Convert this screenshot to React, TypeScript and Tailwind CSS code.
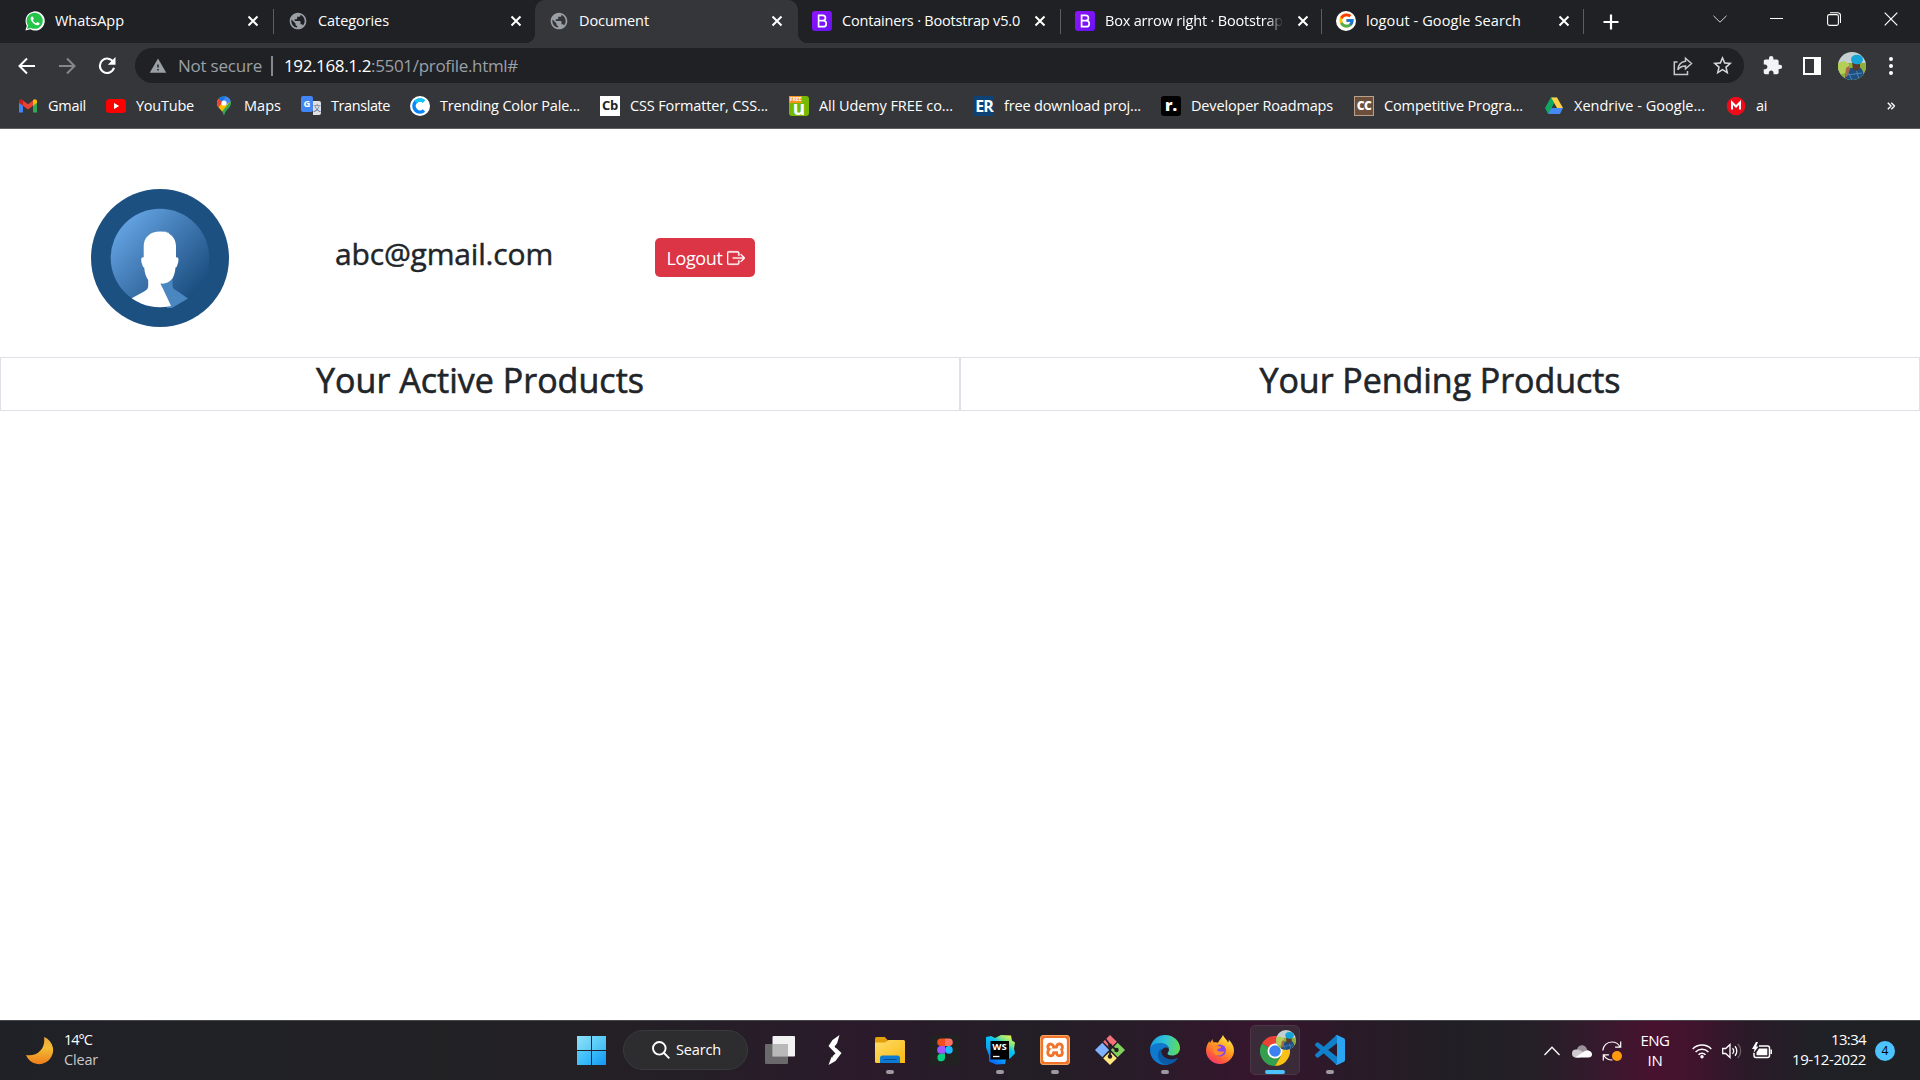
import React, { useLayoutEffect, useRef } from "react";
import { FcGoogle } from "react-icons/fc";
import { MdExtension, MdPublic, MdStarBorder, MdWarning } from "react-icons/md";
import { SiXampp } from "react-icons/si";
import { BsBoxArrowRight } from "react-icons/bs";

/** One line of text whose letter spacing is tuned so that it fills `w` pixels. */
function Fit({ children, w, className = "" }: { children: string; w: number; className?: string }) {
  const ref = useRef<HTMLSpanElement>(null);
  useLayoutEffect(() => {
    const el = ref.current;
    if (!el) return;
    const fit = () => {
      el.style.letterSpacing = "0px";
      const natural = el.getBoundingClientRect().width;
      el.style.letterSpacing = `${(w - natural) / children.length}px`;
    };
    fit();
    document.fonts?.ready.then(fit);
  }, [children, w]);
  return (
    <span ref={ref} className={`inline-block shrink-0 whitespace-pre ${className}`}>
      {children}
    </span>
  );
}

function Cross() {
  return (
    <svg viewBox="0 0 12 12" className="size-3 shrink-0" stroke="#fff" strokeWidth="2">
      <path d="M1.5 1.5l9 9M10.5 1.5l-9 9" />
    </svg>
  );
}

const BootstrapTile = () => (
  <span className="flex size-5 items-center justify-center rounded-[3px] bg-gradient-to-br from-[#9013fb] to-[#6610f2]">
    <svg viewBox="0 0 20 20" className="size-5" fill="none" stroke="#fff" strokeWidth="1.7">
      <path d="M6.6 4.3h4.2a2.6 2.6 0 0 1 0 5.3H6.6zM6.6 9.6h4.6a3 3 0 0 1 0 6.1H6.6z" />
    </svg>
  </span>
);

const WhatsAppIcon = () => (
  <svg viewBox="0 0 20 20" className="size-5">
    <path d="M.4 19.6l1.4-4.9A9.6 9.6 0 1 1 5.4 18.300z" fill="#fff" />
    <path d="M2 18l1-3.600A8.100 8.100 0 1 1 6 17z" fill="#25c54a" />
    <path
      d="M7 5.400c-.8.2-1.500 1.100-1.400 2.200.3 3 3.600 6.400 6.700 6.700 1 .1 2-.5 2.200-1.400v-.8l-2.200-1.100-1.200 1.200c-1.500-.5-2.700-1.700-3.300-3.200l1-1.100-1-2.400z"
      fill="#fff"
    />
  </svg>
);

const Globe = () => <MdPublic className="size-[22px] text-[#9aa0a6]" />;

type TabData = { title: string; w: number; width: string; icon: React.ReactNode; active?: boolean; line?: boolean };

const tabs: TabData[] = [
  { title: "WhatsApp", w: 69, width: "w-[264px]", icon: <WhatsAppIcon />, line: true },
  { title: "Categories", w: 71, width: "w-[261px]", icon: <Globe /> },
  { title: "Document", w: 70, width: "w-[263px]", icon: <Globe />, active: true },
  { title: "Containers · Bootstrap v5.0", w: 178, width: "w-[263px]", icon: <BootstrapTile />, line: true },
  { title: "Box arrow right · Bootstrap", w: 178, width: "w-[261px]", icon: <BootstrapTile />, line: true },
  {
    title: "logout - Google Search",
    w: 155,
    width: "w-[262px]",
    icon: (
      <span className="flex size-5 items-center justify-center rounded-full bg-white">
        <FcGoogle className="size-[17px]" />
      </span>
    ),
    line: true,
  },
];

function Tab({ tab, first }: { tab: TabData; first: boolean }) {
  return (
    <div
      className={`relative flex h-[43px] shrink-0 items-center pb-[2px] ${first ? "pl-[15px]" : "pl-[14px]"} ${tab.width} ${tab.active ? "rounded-t-[10px] bg-[#35363a]" : ""}`}
    >
      {tab.active && (
        <>
          <span className="absolute bottom-0 -left-2.5 size-2.5 bg-[radial-gradient(circle_at_0_0,#202124_10px,#35363a_10.5px)]" />
          <span className="absolute -right-2.5 bottom-0 z-10 size-2.5 bg-[radial-gradient(circle_at_100%_0,#202124_10px,#35363a_10.5px)]" />
        </>
      )}
      <span className="flex size-5 shrink-0 items-center justify-center">{tab.icon}</span>
      <span
        className={`ml-[10px] flex w-[180px] overflow-hidden ${tab.title.startsWith("Box") ? "[mask-image:linear-gradient(to_right,#000_90%,transparent_99%)]" : ""}`}
      >
        <Fit w={tab.w} className="text-[14.5px] leading-5 text-white">
          {tab.title}
        </Fit>
      </span>
      <span className="ml-[12px] flex items-center pt-px">
        <Cross />
      </span>
      {tab.line && <span className="absolute top-[9px] right-0 h-[25px] w-px bg-[#5a5d62]" />}
    </div>
  );
}

function TabStrip() {
  return (
    <div className="flex h-[43px] bg-[#202124] pl-[10px]">
      {tabs.map((t, i) => (
        <Tab key={t.title} tab={t} first={i === 0} />
      ))}
      <div className="flex w-[54px] items-center justify-center">
        <svg viewBox="0 0 16 16" className="size-4" stroke="#fff" strokeWidth="2.200">
          <path d="M8 .5v15M.5 8h15" />
        </svg>
      </div>
      <div className="ml-auto flex h-[37px] items-center">
        <div className="flex w-[57px] justify-center">
          <svg viewBox="0 0 14 8" className="h-2 w-3.5" fill="none" stroke="#d5d6d8">
            <path d="M.5.8L7 7.200 13.500.8" />
          </svg>
        </div>
        <div className="flex w-[57px] justify-center">
          <span className="h-px w-[13px] bg-white" />
        </div>
        <div className="flex w-[57px] justify-center">
          <svg viewBox="0 0 14 14" className="size-3.5" fill="none" stroke="#fff" strokeWidth="1.100">
            <rect x=".6" y="2.600" width="10.800" height="10.800" rx="1.800" />
            <path d="M3 .7h7.500a3 3 0 0 1 3 3V11" />
          </svg>
        </div>
        <div className="flex w-[58px] justify-center">
          <svg viewBox="0 0 14 14" className="size-3.5" stroke="#fff" strokeWidth="1.200">
            <path d="M.7.7l12.600 12.600M13.300.7L.7 13.300" />
          </svg>
        </div>
      </div>
    </div>
  );
}

function Portrait({ className }: { className: string }) {
  return (
    <svg viewBox="0 0 28 28" className={className}>
      <defs>
        <clipPath id="portrait-clip">
          <circle cx="14" cy="14" r="14" />
        </clipPath>
      </defs>
      <g clipPath="url(#portrait-clip)">
        <rect width="28" height="28" fill="#c3cfd0" />
        <rect y="11" width="28" height="17" fill="#8fae3c" />
        <path d="M0 11l6-2 5 3v8l-11 3z" fill="#b3cf58" />
        <path d="M7 28c0-6 2-11 6-12l8-1c4 1 5 8 5 13z" fill="#1d4f83" />
        <path d="M10 20l4 8M18 17l3 10M9 23l15-2" stroke="#4d86b5" />
        <path d="M14 9h8v6l-3 4-4-1z" fill="#5b3a2b" />
        <path d="M7 24l1-8 3-2 1 3-3 8z" fill="#a8694a" />
        <ellipse cx="19" cy="7.500" rx="6" ry="4.800" fill="#17a5d8" />
      </g>
    </svg>
  );
}

function Toolbar() {
  return (
    <div className="flex h-[45px] items-center bg-[#35363a]">
      <div className="flex w-[135px] items-center pl-[18px]">
        <svg viewBox="0 0 18 18" className="size-[18px]" fill="none" stroke="#fff" strokeWidth="2">
          <path d="M17 9H2M9 1.500L1.500 9 9 16.500" />
        </svg>
        <svg viewBox="0 0 18 18" className="ml-[22px] size-[18px]" fill="none" stroke="#85878a" strokeWidth="2">
          <path d="M1 9h15M9 1.500L16.500 9 9 16.500" />
        </svg>
        <svg viewBox="0 0 18 18" className="ml-[22px] size-[18px]" fill="none" stroke="#fff" strokeWidth="2.100">
          <path d="M15.500 5.500A7.200 7.200 0 1 0 16 10.800" />
          <path d="M17.500 0v7.800H9.800z" fill="#fff" stroke="none" />
        </svg>
      </div>
      <div className="flex h-[35px] w-[1609px] items-center rounded-full bg-[#202124] pl-[14px]">
        <MdWarning className="size-[18px] text-[#9aa0a6]" />
        <Fit w={84} className="ml-[11px] text-[17px] leading-6 text-[#9aa0a6]">
          Not secure
        </Fit>
        <span className="ml-[9px] h-5 w-0.5 bg-[#85888c]" />
        <Fit w={87} className="ml-[11px] text-[17px] leading-6 text-white">
          192.168.1.2
        </Fit>
        <Fit w={147} className="text-[17px] leading-6 text-[#9aa0a6]">
          :5501/profile.html#
        </Fit>
        <div className="mr-[10px] ml-auto flex items-center gap-[18px]">
          <svg viewBox="0 0 20 20" className="size-5" fill="none" stroke="#c4c7c9" strokeWidth="1.500">
            <path d="M4.500 6H1.300v12.500h13.200V15" />
            <path d="M12.500 2.200l6 5.300-6 5.300V9.900c-3.500 0-6 1.200-7.700 4 .3-4.500 3-8 7.700-8.700z" />
          </svg>
          <MdStarBorder className="size-[23px] text-[#d5d7d9]" />
        </div>
      </div>
      <div className="flex flex-1 items-center pl-[18px]">
        <MdExtension className="size-[21px] text-[#f1f3f4]" />
        <span className="ml-[20px] flex size-[18px] border-2 border-r-[7px] border-white" />
        <Portrait className="ml-[17px] size-7" />
        <span className="ml-[23px] flex flex-col gap-[3px]">
          <i className="size-1 rounded-full bg-white" />
          <i className="size-1 rounded-full bg-white" />
          <i className="size-1 rounded-full bg-white" />
        </span>
      </div>
    </div>
  );
}

const icons = {
  gmail: (
    <svg viewBox="0 0 20 20" className="size-5">
      <path d="M1 4.500v12h4V8.500z" fill="#4285f4" />
      <path d="M19 4.500v12h-4V8.500z" fill="#34a853" />
      <path d="M5 4.500l5 3.800 5-3.800v5.200l-5 3.800-5-3.800z" fill="#ea4335" />
      <path d="M1 5.500C1 3.300 3.300 2.500 5 4v5.700L1 6.700z" fill="#c5221f" />
      <path d="M19 5.500c0-2.200-2.300-3-4-1.500v5.700l4-3z" fill="#fbbc04" />
    </svg>
  ),
  youtube: (
    <svg viewBox="0 0 20 20" className="size-5">
      <rect y="3" width="20" height="14" rx="3.500" fill="#f00" />
      <path d="M8 7l5.200 3L8 13z" fill="#fff" />
    </svg>
  ),
  maps: (
    <svg viewBox="0 0 20 20" className="size-5">
      <path d="M10 .3c4 0 7 3 7 6.800 0 5-5.400 6-7 12.700C8.400 13.100 3 12.100 3 7.100 3 3.300 6 .3 10 .3z" fill="#34a853" />
      <path d="M16.700 5.200L8 15.500C5.800 12.200 3 10.800 3 7.100c0-1.800.6-3.200 1.600-4.400L10 7z" fill="#fbbc04" />
      <path d="M4.600 2.700L8.500 6 4.800 11.200C3.500 9.700 3 8.700 3 7.100c0-1.800.6-3.200 1.600-4.400z" fill="#ea4335" />
      <path d="M4.600 2.700C6.200.8 9 -.2 12 .6L8 6z" fill="#1a73e8" />
      <path d="M12 .6c2.200.6 4 2.300 4.700 4.600L12 9 8 6z" fill="#4285f4" />
      <circle cx="10" cy="7" r="2.600" fill="#fff" />
    </svg>
  ),
  translate: (
    <span className="flex size-5">
      <i className="flex h-4 w-[12px] items-center justify-center rounded-[2px] bg-[#4285f4] text-[9.500px] leading-4 font-bold text-white not-italic">
        G
      </i>
      <i className="mt-[5px] flex h-[14px] w-2 justify-center rounded-r-[2px] bg-[#dfe1e5] font-['Noto_Sans_CJK_SC',sans-serif] text-[8px] leading-[14px] text-[#5f6f85] not-italic">
        文
      </i>
    </span>
  ),
  color: (
    <svg viewBox="0 0 20 20" className="size-5">
      <circle cx="10" cy="10" r="10" fill="#fff" />
      <path d="M14 5.500a6 6 0 1 0 0 9" fill="none" stroke="#0a84f5" strokeWidth="3.600" />
      <path d="M14 5.500A6 6 0 0 0 5.500 6" fill="none" stroke="#12c5f5" strokeWidth="3.600" />
    </svg>
  ),
  cb: (
    <span className="flex size-5 items-center justify-center bg-white text-[13px] font-bold tracking-[-.3px] text-[#222]">
      Cb
    </span>
  ),
  udemy: (
    <span className="flex size-5 flex-col rounded-[3px] bg-[#76b900] text-white">
      <i className="h-[7px] w-[13px] bg-[#f7941d] px-px text-[5px] leading-[7px] font-bold not-italic">FREE</i>
      <b className="h-[13px] text-center text-[19px] leading-[11px]">u</b>
    </span>
  ),
  er: (
    <span className="flex size-5 items-center justify-center bg-[#0e4174] text-[16px] font-bold tracking-[-1px] text-white">
      ER
    </span>
  ),
  roadmap: (
    <span className="flex size-5 items-center justify-center rounded-[3px] bg-black pb-[2px] text-[16px] font-extrabold text-white">
      r.
    </span>
  ),
  cc: (
    <span className="flex size-5 items-center justify-center border border-[#b9a08a] bg-[#6b4f3b] text-[12px] font-extrabold tracking-[-.5px] text-white">
      CC
    </span>
  ),
  drive: (
    <svg viewBox="0 0 20 20" className="size-5">
      <path d="M7 1.500h6L10 7 4.600 17.500 1.200 12z" fill="#11a861" />
      <path d="M7 1.500h6l6 10.500h-6z" fill="#ffcf48" />
      <path d="M6.800 12H19l-3 6H4z" fill="#4688f4" />
      <path d="M1.200 12L4 18l3.500-6L10 7 7 1.500z" fill="#11a861" />
    </svg>
  ),
  mega: (
    <svg viewBox="0 0 20 20" className="size-5">
      <circle cx="10" cy="10" r="9.300" fill="#ee0c1a" />
      <path d="M6 13.500v-7l4 4 4-4v7" fill="none" stroke="#fff" strokeWidth="2" />
    </svg>
  ),
};

const bookmarks: { icon: React.ReactNode; text: string; w: number; width: string }[] = [
  { icon: icons.gmail, text: "Gmail", w: 38, width: "w-[88px]" },
  { icon: icons.youtube, text: "YouTube", w: 58, width: "w-[108px]" },
  { icon: icons.maps, text: "Maps", w: 37, width: "w-[87px]" },
  { icon: icons.translate, text: "Translate", w: 59, width: "w-[109px]" },
  { icon: icons.color, text: "Trending Color Pale...", w: 140, width: "w-[190px]" },
  { icon: icons.cb, text: "CSS Formatter, CSS...", w: 138, width: "w-[189px]" },
  { icon: icons.udemy, text: "All Udemy FREE co...", w: 134, width: "w-[185px]" },
  { icon: icons.er, text: "free download proj...", w: 137, width: "w-[187px]" },
  { icon: icons.roadmap, text: "Developer Roadmaps", w: 142, width: "w-[193px]" },
  { icon: icons.cc, text: "Competitive Progra...", w: 139, width: "w-[190px]" },
  { icon: icons.drive, text: "Xendrive - Google...", w: 131, width: "w-[182px]" },
  { icon: icons.mega, text: "ai", w: 11, width: "w-[60px]" },
];

function Bookmarks() {
  return (
    <div className="flex h-[41px] items-center border-b border-[#5f6064] bg-[#35363a] pb-[4px] pl-[18px]">
      {bookmarks.map((b) => (
        <div key={b.text} className={`flex shrink-0 items-center gap-[10px] ${b.width}`}>
          {b.icon}
          <Fit w={b.w} className="pb-px text-[14.5px] leading-5 text-white">
            {b.text}
          </Fit>
        </div>
      ))}
      <svg viewBox="0 0 8 8" className="ml-auto mr-[25px] size-2" fill="none" stroke="#fff" strokeWidth="1.400">
        <path d="M.8.8L4 4 .8 7.200M4.300.8L7.500 4 4.300 7.200" />
      </svg>
    </div>
  );
}

function Avatar() {
  return (
    <svg viewBox="0 0 138 138" className="size-[138px]">
      <defs>
        <linearGradient id="avatar-fill" x1=".1" y1=".15" x2=".85" y2=".85">
          <stop offset="0" stopColor="#64a3e2" />
          <stop offset=".5" stopColor="#3f77b0" />
          <stop offset="1" stopColor="#1c4f80" />
        </linearGradient>
        <clipPath id="avatar-clip">
          <circle cx="69" cy="69" r="49.300" />
        </clipPath>
      </defs>
      <circle cx="69" cy="69" r="69" fill="#1c5080" />
      <circle cx="69" cy="69" r="49.300" fill="url(#avatar-fill)" />
      <path d="M69 90l12.500-2v7c0 4 1 5 4 6.500L97 109.500 81 119H76z" fill="#4a86bf" />
      <g clipPath="url(#avatar-clip)">
        <path
          d="M69 42.500c-10 0-16.300 6-16.300 15v11c-3-1-3 3-1.500 7 .5 2 1 3 2 3 .5 6 2 10 4 12.500v6c0 3-2 4.500-5 6l-13 7v10h42.300L69.500 94.500c6 1 11-3 12.500-6 1-2 2-5 2.500-10 1 0 1.500-1 2-3 1.500-4 1.500-8-1.500-7V57.500c0-6-3-11-7.500-13l1-.5-3.500-.8.5-.4z"
          fill="#fff"
        />
      </g>
    </svg>
  );
}

function Page() {
  return (
    <main className="flex-1 bg-white text-[#212529]">
      <div className="flex h-[228px] items-start pt-[60px] pl-[91px]">
        <Avatar />
        <h3 className="mt-[46px] ml-[106px] w-[320px] text-[30px] leading-[38px] [-webkit-text-stroke:0.45px_#212529]">
          <Fit w={218}>abc@gmail.com</Fit>
        </h3>
        <button className="mt-[49px] flex h-[39px] w-[100px] items-center justify-center gap-[4px] rounded-[5px] bg-[#dc3545] pl-px text-white">
          <Fit w={56} className="text-[18px] leading-6">
            Logout
          </Fit>
          <BsBoxArrowRight className="size-[18px] stroke-white stroke-[0.35px]" />
        </button>
      </div>
      <div className="grid h-[54px] grid-cols-2 text-center text-[34px] leading-[44px] [-webkit-text-stroke:0.6px_#212529]">
        <h2 className="border border-[#dee2e6]">
          <Fit w={328}>Your Active Products</Fit>
        </h2>
        <h2 className="border border-[#dee2e6]">
          <Fit w={361}>Your Pending Products</Fit>
        </h2>
      </div>
    </main>
  );
}

const apps: { name: string; node: React.ReactNode; dot?: boolean; active?: boolean }[] = [
  {
    name: "tasks",
    node: (
      <svg viewBox="0 0 30 30" className="size-[30px]">
        <rect x="7.500" y="1" width="22.500" height="20.500" rx="1" fill="#f2f2f2" />
        <rect y="9" width="23" height="20" rx="1" fill="#777" fillOpacity=".85" />
        <rect x="7.500" y="9" width="15.500" height="12.500" fill="#b9b9b9" />
      </svg>
    ),
  },
  {
    name: "bolt",
    node: (
      <svg viewBox="0 0 30 30" className="size-[30px]" fill="#fff">
        <path d="M19.500 0L17 8.500l-2.500 3L21.500 18l-6 8L8.500 30l3-8 4-3.500-7-7.500 4-6z" />
        <path d="M17.500 9l-2 4M13 17.500l-1 5" stroke="#241a26" strokeWidth=".8" />
      </svg>
    ),
  },
  {
    name: "files",
    dot: true,
    node: (
      <svg viewBox="0 0 30 30" className="size-[30px]">
        <defs>
          <linearGradient id="folder" x2="1" y2="1">
            <stop offset="0" stopColor="#ffdc6b" />
            <stop offset="1" stopColor="#f9b90f" />
          </linearGradient>
        </defs>
        <path d="M0 3.500Q0 2 1.500 2h8.300l3.200 3.500V9H0z" fill="#e19f09" />
        <path d="M0 7.500h10L13.500 5H28.500Q30 5 30 6.500V28H1.500Q0 28 0 26.500z" fill="url(#folder)" />
        <path d="M5 28v-5q0-2.500 2.500-2.500h15Q25 20.500 25 23v5z" fill="#0c7bd4" />
        <path d="M8.500 24.500h13" stroke="#0a4c8c" />
      </svg>
    ),
  },
  {
    name: "figma",
    node: (
      <svg viewBox="0 0 30 30" className="size-[30px]">
        <rect width="30" height="30" rx="3" fill="#222223" />
        <path d="M15 3.500h-4a3.800 3.800 0 0 0 0 7.600h4z" fill="#f24e1e" />
        <path d="M15 3.500h4a3.800 3.800 0 0 1 0 7.600h-4z" fill="#ff7262" />
        <path d="M15 11.100h-4a3.800 3.800 0 0 0 0 7.600h4z" fill="#a259ff" />
        <circle cx="18.900" cy="14.900" r="3.800" fill="#1abcfe" />
        <path d="M15 18.700h-4a3.800 3.800 0 1 0 4 3.800z" fill="#0acf83" />
      </svg>
    ),
  },
  {
    name: "webstorm",
    dot: true,
    node: (
      <span className="relative flex size-[30px] items-center justify-center">
        <svg viewBox="0 0 30 30" className="absolute inset-0 size-[30px]">
          <defs>
            <linearGradient id="ws" x1=".9" y1="0" x2=".25" y2="1">
              <stop offset="0" stopColor="#fcf84a" />
              <stop offset=".25" stopColor="#7ee58a" />
              <stop offset=".4" stopColor="#07c3f2" />
              <stop offset=".7" stopColor="#0aa6f5" />
              <stop offset="1" stopColor="#0860fa" />
            </linearGradient>
          </defs>
          <path d="M1 2l5-1 4 2 6-3 10 .5 1 5 3 2-1 6 1 5-5 5-4 .5-1 5-9 .5-7-3 0-6-3-8z" fill="url(#ws)" />
          <rect x="5.500" y="6" width="18.500" height="18.500" fill="#000" />
          <path d="M8 21.500h6.500" stroke="#fff" strokeWidth="1.300" />
        </svg>
        <i className="relative -mt-[7px] text-[9.500px] leading-3 font-bold text-white not-italic">WS</i>
      </span>
    ),
  },
  {
    name: "xampp",
    dot: true,
    node: (
      <span className="flex size-[30px] items-center justify-center rounded-[3px] border border-[#f6a765] bg-[#f0742a]">
        <SiXampp className="size-[24px] text-white" />
      </span>
    ),
  },
  {
    name: "git",
    node: (
      <svg viewBox="0 0 30 30" className="size-[30px]">
        <path d="M15 0l6.800 6.800L15 13.600 8.200 6.800z" fill="#f3717a" />
        <path d="M7.300 7.800l6.800 7.200-6.800 7.300L0 15z" fill="#80b3ff" />
        <path d="M22.700 7.800L30 15l-7.300 7.300-6.800-7.300z" fill="#80d25b" />
        <path d="M15 16.400l6.800 6.800L15 30l-6.800-6.800z" fill="#ffe680" />
        <path d="M10.500 4l4.500 6v12M15 10l6.500 5" stroke="#241d25" strokeWidth="1.800" fill="none" />
        <circle cx="15" cy="10.500" r="2" fill="#241d25" />
        <circle cx="15" cy="21.500" r="2.200" fill="#241d25" />
        <circle cx="21.500" cy="15" r="2.200" fill="#241d25" />
      </svg>
    ),
  },
  {
    name: "edge",
    dot: true,
    node: (
      <svg viewBox="0 0 30 30" className="size-[30px]">
        <defs>
          <linearGradient id="edge-top" x1="0" y1=".4" x2="1" y2=".5">
            <stop offset="0" stopColor="#1b9de2" />
            <stop offset=".5" stopColor="#2fc4d6" />
            <stop offset="1" stopColor="#63dc52" />
          </linearGradient>
        </defs>
        <path d="M0 14C1 6 7 0 15 0c9 0 15 6.500 15 13 0 5-4 7.500-8 7.500-3 0-4.500-1-4.500-2 0-1 1.500-1.500 1.500-4 0-3-3-6-7.500-6C5 8.500 1 12 0 14z" fill="url(#edge-top)" />
        <path d="M0 15c0-4 4-7 10-7 5 0 9 3 9 6.500-1-2-3-2.500-5-1.500-3 1.500-4.500 5-3 9.500 1 3 4 6 8 7-1.500.4-3 .5-4 .5C6.500 30 0 23 0 15z" fill="#0f78cf" />
        <path d="M11.500 13.500C7 16 7 22 10 26s8 4.500 12 2.500c3-1.500 5-3.500 6-6-3 2-8 2.500-12 .5-5-2.500-5-7-4.500-9.500z" fill="#0c59a4" />
      </svg>
    ),
  },
  {
    name: "firefox",
    node: (
      <svg viewBox="0 0 30 30" className="size-[30px]">
        <defs>
          <linearGradient id="fox" x1=".8" y1="0" x2=".2" y2="1">
            <stop offset="0" stopColor="#fff04f" />
            <stop offset=".4" stopColor="#ffa51e" />
            <stop offset=".75" stopColor="#ff5a3b" />
            <stop offset="1" stopColor="#f0307c" />
          </linearGradient>
        </defs>
        <path d="M18 0c1 3 4 4.500 5 7.500 1-1 .8-2 .5-3 3 3 5.500 6.500 5.500 11C29 23 22.500 29 15 29S1 23 1 15.500c0-4 1.500-7 3.500-9.500 0 1 .2 1.500.5 2L7.500 4c0 2 .5 3 1.500 3.500 1.500-.5 3-.3 4 .2C14 5 17 3 18 0z" fill="url(#fox)" />
        <circle cx="15" cy="15.500" r="6" fill="#8a45ea" />
        <path d="M8 11c2-1 4-1 5.500 0l3 1c-1 1.500-3 1.500-4 2-1 .8 0 2.500 2 2.500s3 .5 5-.5c-1 3-4 5-7 4.500S7 17 8 11z" fill="#ff8a2c" />
      </svg>
    ),
  },
  {
    name: "chrome",
    active: true,
    node: (
      <span className="relative size-[30px]">
        <svg viewBox="0 0 30 30" className="size-[30px]">
          <path d="M15 15L2 7.500A15 15 0 0 1 28 7.500H15z" fill="#ea4335" />
          <path d="M15 15l6.500 3.700L15 30A15 15 0 0 1 2 7.500z" fill="#34a04f" />
          <path d="M15 7.500h13A15 15 0 0 1 15 30l6.500-11.200z" fill="#fbc116" />
          <circle cx="15" cy="15" r="7.500" fill="#fff" />
          <circle cx="15" cy="15" r="5.800" fill="#3b82f0" />
        </svg>
        <Portrait className="absolute -top-1.5 left-4 size-5" />
      </span>
    ),
  },
  {
    name: "code",
    dot: true,
    node: (
      <svg viewBox="0 0 30 30" className="size-[30px]">
        <path d="M22 .3V8.200L3.300 22.400q-.8.5-1.500 0L.4 21q-.8-.9 0-1.700L20.500.9z" fill="#1180cb" />
        <path d="M22 29.700V21.800L3.300 7.600q-.8-.5-1.500 0L.4 9q-.8.900 0 1.700L20.500 29.100z" fill="#1180cb" />
        <path d="M22 0L29 3.300Q30 3.800 30 5v20q0 1.200-1 1.700L22 30q-1 0-1.500-.9l1.500-.6V1.500L20.500.9Q21 0 22 0z" fill="#2ba5f2" />
      </svg>
    ),
  },
];

function Taskbar() {
  return (
    <footer className="flex h-[60px] items-stretch border-t border-[#46474b] bg-[linear-gradient(90deg,#202127_0%,#222225_23%,#241f26_35%,#2b1a2b_45%,#231e26_54%,#2a1b29_60%,#37152e_66%,#2a1a28_70%,#211f25_76%,#251f27_80%,#341a2c_83%,#48122f_86%,#42132e_88%,#2a1a28_91%,#1f2126_95%,#1f2023_100%)] text-[15px] text-white">
      <div className="flex w-[563px] items-center pl-[26px]">
        <svg viewBox="0 0 28 28" className="size-7">
          <defs>
            <linearGradient id="moon" x2="0" y2="1">
              <stop offset="0" stopColor="#e7a43c" />
              <stop offset=".4" stopColor="#f2bd35" />
              <stop offset="1" stopColor="#ef7d1b" />
            </linearGradient>
          </defs>
          <path d="M18 0A14 14 0 1 1 0 18C11 20 20 12 18 0z" fill="url(#moon)" />
        </svg>
        <div className="ml-[10px] flex flex-col pb-[2px] text-[14.5px] leading-5">
          <Fit w={30}>14°C</Fit>
          <Fit w={34} className="text-[#c9c9cb]">
            Clear
          </Fit>
        </div>
      </div>
      <div className="flex w-[60px] items-center pl-[14px]">
        <div className="grid size-[29px] grid-cols-2 gap-px">
          <i className="bg-gradient-to-br from-[#8ce1fb] to-[#5dcbf5]" />
          <i className="bg-gradient-to-br from-[#6fd8fb] to-[#3dbcf5]" />
          <i className="bg-gradient-to-br from-[#57cdfb] to-[#26aef6]" />
          <i className="bg-gradient-to-br from-[#3dbdf9] to-[#0f97f2]" />
        </div>
      </div>
      <div className="mt-[9px] flex h-10 w-[125px] items-center rounded-full border border-[#39393d] bg-[#2d2d30] pl-[28px]">
        <svg viewBox="0 0 18 18" className="size-[18px]" fill="none" stroke="#fff" strokeWidth="1.900">
          <circle cx="7.300" cy="7.300" r="6.300" />
          <path d="M12 12l5.300 5.300" />
        </svg>
        <Fit w={45} className="ml-[6px] text-[14.5px] leading-5">
          Search
        </Fit>
      </div>
      <div className="ml-[4px] flex">
        {apps.map((a) => (
          <div key={a.name} className="flex w-[55px] flex-col items-center pt-1">
            <div
              className={`flex h-[50px] w-[50px] items-start justify-center rounded-[5px] pt-[10px] ${a.active ? "border border-[#4b3645] bg-[#3b2a37] pt-[9px]" : ""}`}
            >
              {a.node}
            </div>
            {a.active && <i className="-mt-[5px] h-1 w-5 rounded-full bg-[#4cc2ff]" />}
            {a.dot && <i className="-mt-[5px] h-1 w-2 rounded-full bg-[#9d999e]" />}
          </div>
        ))}
      </div>
      <div className="ml-auto flex items-center pr-[25px]">
        <svg viewBox="0 0 16 10" className="h-[10px] w-4" fill="none" stroke="#fff" strokeWidth="1.300">
          <path d="M.5 9L8 1.200 15.500 9" />
        </svg>
        <svg viewBox="0 0 20 14" className="ml-3 h-3.5 w-5">
          <path d="M5 7a5 5 0 0 1 10-1.500L18 8H4z" fill="#9b9297" />
          <path d="M4 13.500A4 4 0 0 1 4 5.500c3-.5 5 1.500 8 3L8 13.500z" fill="#cfcacd" />
          <path d="M3 13.500l9-6c3-2 8-.5 8 3 0 2-1.500 3-3.500 3z" fill="#fff" />
        </svg>
        <svg viewBox="0 0 20 20" className="ml-[10px] size-5" fill="none" stroke="#fff" strokeWidth="1.200">
          <path d="M.8 9.500C1.200 4.500 5 1 9.800 1c3.600 0 6.600 1.800 8.200 4.800M18.700.5v5.600h-5.600" />
          <path d="M1.300 19.500v-5.600h5.600M1.800 14.300C3.500 17.300 6.500 19.200 10.500 19" />
          <circle cx="15" cy="15" r="5" fill="#ff9a0d" stroke="none" />
        </svg>
        <div className="ml-[18px] flex w-[30px] flex-col items-center pb-px leading-5">
          <Fit w={29}>ENG</Fit>
          <Fit w={15}>IN</Fit>
        </div>
        <svg viewBox="0 0 20 16" className="ml-[22px] h-4 w-5" fill="none" stroke="#fff" strokeWidth="1.500">
          <path d="M.7 6a13 13 0 0 1 18.600 0M3.600 9a9 9 0 0 1 12.800 0M6.500 11.800a5 5 0 0 1 7 0" />
          <circle cx="10" cy="13.800" r="1.700" fill="#fff" stroke="none" />
        </svg>
        <svg viewBox="0 0 20 16" className="ml-[10px] h-4 w-5" fill="none" stroke="#fff" strokeWidth="1.300">
          <path d="M.7 5.500h3L8 1.500v13l-4.300-4h-3zM10.500 5.300a4 4 0 0 1 0 5.400M13 3.300a7 7 0 0 1 0 9.400" />
          <path d="M15.800 1a10 10 0 0 1 0 14" stroke="#6b6169" />
        </svg>
        <svg viewBox="0 0 20 18" className="ml-[10px] h-[18px] w-5" fill="none" stroke="#fff" strokeWidth="1.500">
          <path d="M7 4h8.500a2 2 0 0 1 2 2v7.500a2 2 0 0 1-2 2H4a2 2 0 0 1-2-2V11" />
          <path d="M7 6.500h8.300v6.700H4.500V10.500z" fill="#fff" stroke="none" />
          <path d="M19.200 7.500v4.500" />
          <path d="M4 0L0 7h2.500L1.500 11 6.500 4.500H4.200L6 0z" fill="#fff" stroke="none" />
        </svg>
        <div className="ml-[20px] flex w-[74px] flex-col items-end pb-[3px] leading-5">
          <Fit w={35}>13:34</Fit>
          <Fit w={74}>19-12-2022</Fit>
        </div>
        <span className="ml-[9px] flex size-5 items-center justify-center rounded-full bg-[#4cc2ff] text-[12px] text-black">
          4
        </span>
      </div>
    </footer>
  );
}

export default function App() {
  return (
    <div className="flex h-[1080px] w-[1920px] flex-col overflow-hidden bg-white font-['Open_Sans','Noto_Sans',sans-serif]">
      <TabStrip />
      <Toolbar />
      <Bookmarks />
      <Page />
      <Taskbar />
    </div>
  );
}
